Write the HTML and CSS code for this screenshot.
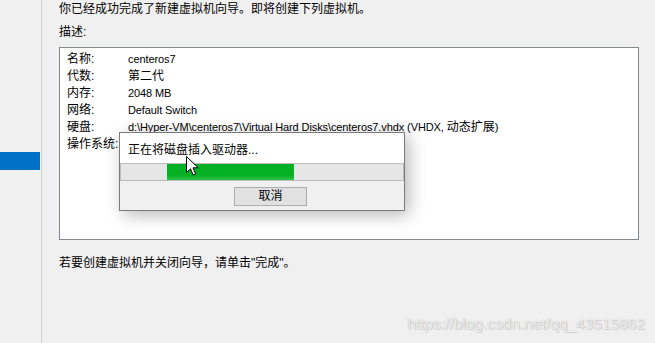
FILE: index.html
```html
<!DOCTYPE html>
<html>
<head>
<meta charset="utf-8">
<link rel="stylesheet" href="styles.css">
</head>
<body>
<div class="page">
  <div class="sidebar"><div class="sel"></div></div>
  <div class="main">
    <div class="line intro">你已经成功完成了新建虚拟机向导。即将创建下列虚拟机。</div>
    <div class="line desc">描述:</div>
    <div class="box">
      <div class="row"><span class="lab">名称:</span><span class="val">centeros7</span></div>
      <div class="row"><span class="lab">代数:</span><span class="val"><span class="cjk">第二代</span></span></div>
      <div class="row"><span class="lab">内存:</span><span class="val">2048 MB</span></div>
      <div class="row"><span class="lab">网络:</span><span class="val">Default Switch</span></div>
      <div class="row"><span class="lab">硬盘:</span><span class="val">d:\Hyper-VM\centeros7\Virtual Hard Disks\centeros7.vhdx (VHDX, <span class="cjk">动态扩展</span>)</span></div>
      <div class="row"><span class="lab">操作系统:</span><span class="val"></span></div>
    </div>
    <div class="line finish">若要创建虚拟机并关闭向导，请单击"完成"。</div>
  </div>
</div>

<div class="dialog">
  <div class="dlg-top">正在将磁盘插入驱动器...</div>
  <div class="progress"><div class="fill" style="margin-left:46px;width:127px"></div></div>
  <div class="dlg-bottom"><div class="btn">取消</div></div>
</div>

<svg class="cursor" width="14" height="20" viewBox="0 0 14 20">
  <path d="M0.5 0.5 L0.5 16.5 L4.5 12.8 L7.2 19 L9.6 18 L7 11.8 L12.2 11.8 Z" fill="#fff" stroke="#000" stroke-width="1" stroke-linejoin="miter"/>
</svg>

<div class="watermark">https://blog.csdn.net/qq_43515862</div>
</body>
</html>
```
FILE: styles.css
```css
html, body {
  margin: 0;
  padding: 0;
}
body {
  width: 655px;
  height: 343px;
  overflow: hidden;
  background: #f0f0f0;
  font-family: "Liberation Sans", "Noto Sans CJK SC", sans-serif;
  font-size: 12px;
  color: #000;
  position: relative;
}
.page {
  display: flex;
  height: 343px;
}
.sidebar {
  width: 41px;
  border-right: 1px solid #d4d4d4;
  flex: none;
}
.sel {
  margin-top: 152px;
  width: 40px;
  height: 18px;
  background: #0072c6;
}
.main {
  padding-left: 17px;
  flex: 1;
}
.line {
  line-height: 17px;
  height: 17px;
  white-space: nowrap;
}
.intro {
  margin-top: 1px;
}
.desc {
  margin-top: 6px;
}
.box {
  margin-top: 6px;
  width: 578px;
  height: 188px;
  background: #fff;
  border: 1px solid #828790;
  padding-top: 3px;
}
.row {
  display: flex;
  height: 17px;
  line-height: 17px;
  padding-left: 7px;
  white-space: nowrap;
}
.lab {
  width: 61px;
  flex: none;
}
.val {
  font-size: 11px;
  letter-spacing: -0.1px;
}
.cjk {
  font-size: 12px;
  letter-spacing: 0;
}
.finish {
  margin-top: 15px;
}
.dialog {
  position: absolute;
  left: 119px;
  top: 132px;
  width: 284px;
  height: 77px;
  border: 1px solid #7a7a7a;
  background: #f0f0f0;
  box-shadow: 4px 4px 16px rgba(0,0,0,0.28);
  display: flex;
  flex-direction: column;
}
.dlg-top {
  height: 30px;
  background: #fff;
  padding-left: 8px;
  line-height: 30px;
  padding-top: 2px;
  box-sizing: border-box;
  white-space: nowrap;
}
.progress {
  height: 16px;
  border: 1px solid #bcbcbc;
  background: #e6e6e6;
  display: flex;
}
.fill {
  height: 16px;
  background: linear-gradient(#06b025 0, #06b025 70%, #2cc44a 100%);
}
.dlg-bottom {
  flex: 1;
  display: flex;
  padding-top: 6px;
  padding-left: 114px;
}
.btn {
  width: 71px;
  height: 17px;
  border: 1px solid #adadad;
  background: #e1e1e1;
  text-align: center;
  line-height: 17px;
}
.cursor {
  position: absolute;
  left: 186px;
  top: 156px;
}
.watermark {
  position: absolute;
  right: 10px;
  top: 315px;
  font-family: "Liberation Sans", Arial, sans-serif;
  font-size: 15.5px;
  color: rgba(255,255,255,0.75);
  text-shadow: 0 0 1px rgba(0,0,0,0.25), 1px 1px 1px rgba(0,0,0,0.12);
  white-space: nowrap;
}
```
